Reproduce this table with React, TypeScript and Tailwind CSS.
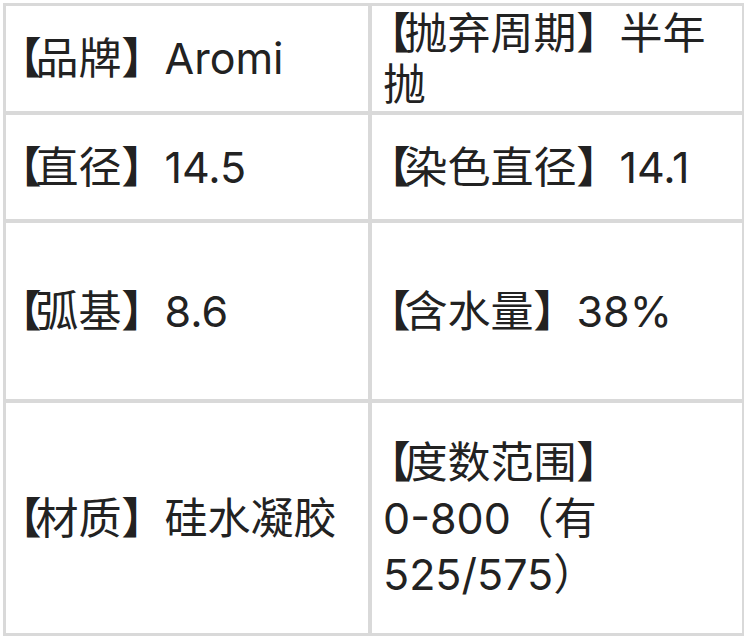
import React from "react";

interface Spec {
  label: string;
  value: React.ReactNode;
}

const rows: [Spec, Spec][] = [
  [
    { label: "品牌", value: "Aromi" },
    { label: "抛弃周期", value: "半年抛" },
  ],
  [
    { label: "直径", value: "14.5" },
    { label: "染色直径", value: "14.1" },
  ],
  [
    { label: "弧基", value: "8.6" },
    { label: "含水量", value: "38%" },
  ],
  [
    { label: "材质", value: "硅水凝胶" },
    {
      label: "度数范围",
      value: (
        <>
          <span className="whitespace-nowrap">0-800</span>（有525/575）
        </>
      ),
    },
  ],
];

function Cell({ spec, right, tall }: { spec: Spec; right?: boolean; tall?: boolean }) {
  return (
    <div className={`flex items-center bg-white pr-[20px] ${right ? "pl-[11px]" : "pl-[8px]"}`}>
      <p
        className={`text-[43px] text-[#222] [text-spacing-trim:trim-start] ${tall ? "leading-[56px]" : "leading-[51px]"}`}
      >
        <span className="ml-[6px] -mr-[6px] font-bold">【</span>
        {spec.label}
        <span className="font-bold">】</span>
        {spec.value}
      </p>
    </div>
  );
}

export default function App() {
  return (
    <div
      className="w-[744px] h-[636px] overflow-hidden bg-white pl-[3px] pt-[3px]"
      style={{ fontFamily: '"Inter", "Noto Sans CJK SC", sans-serif' }}
    >
      <div className="grid w-[742px] grid-cols-[362px_370px] grid-rows-[105px_104px_176px_230px] gap-[4px] bg-[#d9d9d9] p-[3px]">
        {rows.map(([a, b], i) => (
          <React.Fragment key={i}>
            <Cell spec={a} />
            <Cell spec={b} right tall={i === 3} />
          </React.Fragment>
        ))}
      </div>
    </div>
  );
}
